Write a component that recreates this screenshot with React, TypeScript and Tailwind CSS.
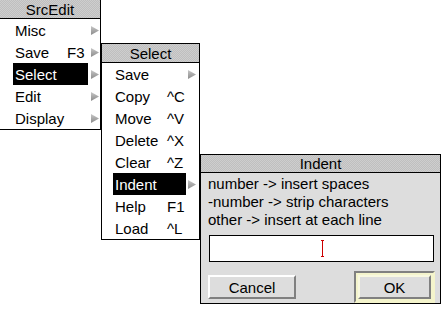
import React from "react";

const font = { fontFamily: '"Liberation Sans", Arial, sans-serif' };

const titleBg =
  "bg-[#c6c6c6] bg-[image:repeating-conic-gradient(#bfbfbf_0_25%,#cecece_0_50%)] bg-[length:2px_2px]";

const Arrow = () => (
  <svg width="8" height="9" viewBox="0 0 8 9" className="shrink-0">
    <defs>
      <linearGradient id="arr" x1="0" y1="0" x2="0" y2="1">
        <stop offset="0" stopColor="#c8c8c8" />
        <stop offset="0.5" stopColor="#a8a8a8" />
        <stop offset="1" stopColor="#8c8c8c" />
      </linearGradient>
    </defs>
    <polygon points="0,0 8,4.5 0,9" fill="url(#arr)" />
  </svg>
);

interface Item {
  label: string;
  key?: string;
  sub?: boolean;
  on?: boolean;
}

const MenuRow = ({ item, hl, keyAt }: { item: Item; hl: string; keyAt: string }) => (
  <div className="flex h-[22px] items-center">
    <div
      className={`flex h-[22px] items-center ${hl} ${
        item.on ? "bg-black text-white" : "text-black"
      }`}
    >
      <span className="pl-[2px]">{item.label}</span>
      {item.key && <span className={`absolute ${keyAt}`}>{item.key}</span>}
    </div>
    {item.sub && <Arrow />}
  </div>
);

const srcItems: Item[] = [
  { label: "Misc", sub: true },
  { label: "Save", key: "F3", sub: true },
  { label: "Select", sub: true, on: true },
  { label: "Edit", sub: true },
  { label: "Display", sub: true },
];

const selItems: Item[] = [
  { label: "Save", sub: true },
  { label: "Copy", key: "^C" },
  { label: "Move", key: "^V" },
  { label: "Delete", key: "^X" },
  { label: "Clear", key: "^Z" },
  { label: "Indent", sub: true, on: true },
  { label: "Help", key: "F1" },
  { label: "Load", key: "^L" },
];

export default function App() {
  return (
    <div className="relative h-[309px] w-[442px] overflow-hidden bg-white text-[15px] leading-none" style={font}>
      {/* SrcEdit menu */}
      <div className="absolute left-[-1px] top-[-1px] w-[102px] border border-black bg-white">
        <div className={`flex h-[19px] items-center justify-center border-b border-black ${titleBg}`}>
          SrcEdit
        </div>
        <div>
          {srcItems.map((it) => (
            <div key={it.label} className="relative">
              <MenuRow item={it} hl="ml-[13px] mr-[3px] w-[75px]" keyAt="left-[67px]" />
            </div>
          ))}
        </div>
      </div>

      {/* Select submenu */}
      <div className="absolute left-[101px] top-[43px] w-[99px] border border-black bg-white">
        <div className={`flex h-[19px] items-center justify-center border-b border-black ${titleBg}`}>
          Select
        </div>
        <div>
          {selItems.map((it) => (
            <div key={it.label} className="relative">
              <MenuRow item={it} hl="ml-[11px] mr-[2px] w-[73px]" keyAt="left-[65px]" />
            </div>
          ))}
        </div>
      </div>

      {/* Indent dialog */}
      <div className="absolute left-[200px] top-[154px] flex h-[150px] w-[241px] flex-col border border-black bg-[#dddddd]">
        <div className={`flex h-[18px] items-center justify-center border-b border-black ${titleBg}`}>
          Indent
        </div>
        <div className="flex flex-col pl-[7px] pt-[2px] leading-[18px]">
          <span>number -&gt; insert spaces</span>
          <span>-number -&gt; strip characters</span>
          <span>other -&gt; insert at each line</span>
        </div>
        <div className="relative ml-[8px] mt-[6px] h-[27px] w-[225px] border border-black bg-white">
          <div className="absolute left-[111px] top-[4px] flex h-[17px] w-[3px] flex-col items-center justify-between">
            <div className="h-px w-[3px] bg-[#cc0000]" />
            <div className="w-px flex-1 bg-[#cc0000]" />
            <div className="h-px w-[3px] bg-[#cc0000]" />
          </div>
        </div>
        <div className="mt-[9px] flex items-center justify-between pl-[7px] pr-[5px]">
          <div className="flex h-[24px] w-[88px] items-center justify-center border-2 border-t-white border-l-white border-b-[#808080] border-r-[#808080] bg-[#dddddd]">
            Cancel
          </div>
          <div className="flex h-[32px] w-[81px] items-center justify-center border-2 border-t-[#808080] border-l-[#808080] border-b-[#f4f4cc] border-r-[#f4f4cc] bg-[#f4f4cc] p-[2px]">
            <div className="flex h-full w-full items-center justify-center border-2 border-t-[#f8f8e0] border-l-[#f8f8e0] border-b-[#808080] border-r-[#808080] bg-[#dddddd]">
              OK
            </div>
          </div>
        </div>
      </div>
    </div>
  );
}
